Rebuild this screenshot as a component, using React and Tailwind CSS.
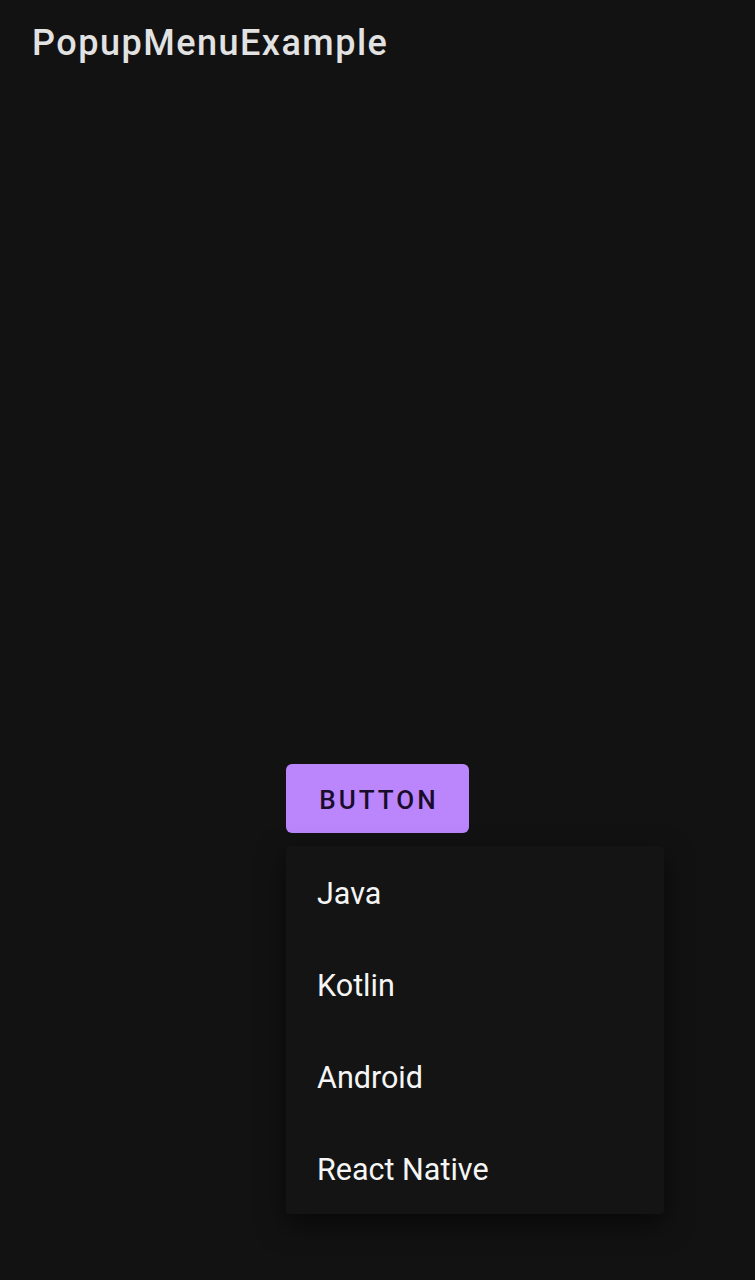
export default function App() {
  const items = ["Java", "Kotlin", "Android", "React Native"];
  return (
    <div
      className="relative w-[755px] h-[1280px] bg-[#121212] overflow-hidden"
      style={{ fontFamily: "Roboto, 'Liberation Sans', sans-serif" }}
    >
      <div className="pl-[32px] pt-[20px] h-[63px] text-[36px] leading-[46px] font-medium tracking-[1.5px] text-[#e2e2e2]">
        PopupMenuExample
      </div>
      <div className="pl-[286px] pt-[701px]">
        <div className="w-[183px] h-[69px] rounded-[6px] bg-[#bb86fc] flex items-center justify-center pt-[3px] text-[#1a0c2b] text-[26px] font-medium tracking-[3px] pl-[3px]">
          BUTTON
        </div>
        <div className="mt-[13px] w-[378px] bg-[#141414] shadow-[0_10px_28px_rgba(0,0,0,0.55)] rounded-[3px]">
          {items.map((t) => (
            <div
              key={t}
              className="h-[92px] flex items-center pl-[31px] pt-[3px] text-[30.5px] text-[#f5f5f5]"
            >
              {t}
            </div>
          ))}
        </div>
      </div>
    </div>
  );
}
